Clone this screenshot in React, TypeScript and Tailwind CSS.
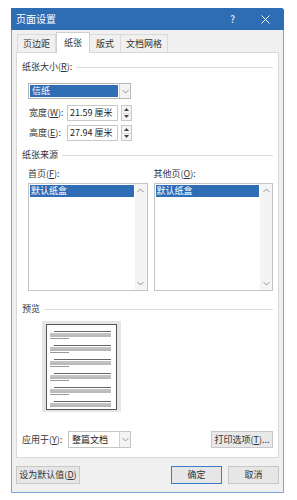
import React from "react";

const font = { fontFamily: '"Noto Sans CJK SC", "Noto Sans", sans-serif' };

function SectionHeader({ label }: { label: React.ReactNode }) {
  return (
    <div className="flex items-center h-[12px] gap-[4px]">
      <span className="text-[9px] leading-[12px] text-[#333] whitespace-nowrap">{label}</span>
      <div className="flex-1 h-px bg-[#dcdcdc]" />
    </div>
  );
}

function Chevron({ up = false }: { up?: boolean }) {
  return (
    <svg width="7" height="5" viewBox="0 0 7 5">
      <path d={up ? "M0.5 4 L3.5 1 L6.5 4" : "M0.5 1 L3.5 4 L6.5 1"} fill="none" stroke="#8a8a8a" strokeWidth="0.9" />
    </svg>
  );
}

function Spinner() {
  return (
    <div className="w-[11px] h-[16px] border border-[#c8c8c8] bg-[#f4f4f4] flex flex-col">
      <div className="flex-1 flex items-center justify-center border-b border-[#dcdcdc]">
        <svg width="5" height="3" viewBox="0 0 5 3"><path d="M0 3 L2.5 0 L5 3 Z" fill="#444" /></svg>
      </div>
      <div className="flex-1 flex items-center justify-center">
        <svg width="5" height="3" viewBox="0 0 5 3"><path d="M0 0 L2.5 3 L5 0 Z" fill="#444" /></svg>
      </div>
    </div>
  );
}

function ListBox() {
  return (
    <div className="flex-1 h-[108px] border border-[#c4c4c4] bg-white flex">
      <div className="flex-1 p-px">
        <div className="h-[12px] bg-[#2f6db5] text-white text-[9px] leading-[12px] px-[1px]">默认纸盒</div>
      </div>
      <div className="w-[12px] bg-[#f4f4f4] flex flex-col justify-between items-center py-[4px]">
        <Chevron up />
        <Chevron />
      </div>
    </div>
  );
}

function PreviewPage() {
  const groups = [0, 14, 28, 42, 56, 70];
  return (
    <div className="w-[79px] h-[91px] bg-[#e6e6e6] flex items-center justify-center ml-[14px]">
      <div className="w-[71px] h-[86px] bg-white border border-[#555]">
        <svg width="69" height="84" viewBox="0 0 69 84">
          {groups.map((g, i) => (
            <g key={i}>
              <rect x="7" y={6 + g} width="57" height="1" fill="#666" />
              <rect x="3" y={8.5 + g} width="61" height="1" fill="#888" />
              <rect x="3" y={10.5 + g} width="61" height="1" fill="#777" />
              {i < 5 && <rect x="3" y={13 + g} width="19" height="1" fill="#999" />}
            </g>
          ))}
        </svg>
      </div>
    </div>
  );
}

export default function App() {
  return (
    <div className="w-[297px] h-[500px] bg-white pt-[8px] pl-[11px]" style={font}>
      <div className="w-[273px] h-[485px] border border-[#7aa3d6] bg-[#f0f0f0] flex flex-col rounded-tr-[3px]">
        {/* Title bar */}
        <div className="h-[22px] bg-[#2e6db4] flex items-center px-[5px] text-white shrink-0 -mx-px -mt-px rounded-tr-[3px]">
          <span className="text-[10px] leading-none">页面设置</span>
          <div className="flex-1" />
          <span className="text-[10px] leading-none mr-[26px]">?</span>
          <svg width="9" height="9" viewBox="0 0 9 9" className="mr-[9px]">
            <path d="M0.5 0.5 L8.5 8.5 M8.5 0.5 L0.5 8.5" stroke="white" strokeWidth="1" />
          </svg>
        </div>

        <div className="flex flex-col px-[4px]">
          {/* Tabs */}
          <div className="flex items-end h-[22px] pl-[1px] text-[9px] text-[#333]">
            <div className="h-[18px] px-[5px] flex items-center border border-b-0 border-[#dadada] bg-[#f0f0f0]">页边距</div>
            <div className="h-[21px] px-[7px] flex items-center border border-b-0 border-[#d0d0d0] bg-white -mb-px relative z-10">纸张</div>
            <div className="h-[18px] px-[6px] flex items-center border border-b-0 border-l-0 border-[#dadada] bg-[#f0f0f0]">版式</div>
            <div className="h-[18px] px-[5px] flex items-center border border-b-0 border-l-0 border-[#dadada] bg-[#f0f0f0]">文档网格</div>
          </div>

          {/* Panel */}
          <div className="h-[406px] border border-[#d9d9d9] bg-white pt-[8px] px-[5px] flex flex-col">
            <SectionHeader label={<>纸张大小(<u>R</u>):</>} />
            <div className="mt-[10px] ml-[6px] w-[103px] h-[16px] border border-[#b8b8b8] flex">
              <div className="flex-1 p-px">
                <div className="h-full bg-[#2f6db5] text-white text-[9px] leading-[12px] px-[2px]">信纸</div>
              </div>
              <div className="w-[11px] border-l border-[#d0d0d0] bg-[#f4f4f4] flex items-center justify-center">
                <Chevron />
              </div>
            </div>
            <div className="mt-[6px] ml-[7px] flex items-center h-[16px]">
              <span className="w-[38px] text-[9px] text-[#333]">宽度(<u>W</u>):</span>
              <div className="w-[51px] h-[16px] border border-[#c8c8c8] text-[9px] leading-[14px] text-[#222] px-[2px]">21.59 厘米</div>
              <div className="ml-[3px]"><Spinner /></div>
            </div>
            <div className="mt-[4px] ml-[7px] flex items-center h-[16px]">
              <span className="w-[38px] text-[9px] text-[#333]">高度(<u>E</u>):</span>
              <div className="w-[51px] h-[16px] border border-[#c8c8c8] text-[9px] leading-[14px] text-[#222] px-[2px]">27.94 厘米</div>
              <div className="ml-[3px]"><Spinner /></div>
            </div>

            <div className="mt-[8px]"><SectionHeader label="纸张来源" /></div>
            <div className="mt-[7px] ml-[6px] flex gap-[6px]">
              <div className="flex-1 flex flex-col">
                <span className="text-[9px] leading-[12px] text-[#333]">首页(<u>F</u>):</span>
                <div className="mt-[3px] flex"><ListBox /></div>
              </div>
              <div className="flex-1 flex flex-col">
                <span className="text-[9px] leading-[12px] text-[#333]">其他页(<u>O</u>):</span>
                <div className="mt-[3px] flex"><ListBox /></div>
              </div>
            </div>

            <div className="mt-[12px]"><SectionHeader label="预览" /></div>
            <div className="mt-[6px] ml-[6px]"><PreviewPage /></div>

            <div className="mt-[19px] flex items-center h-[17px]">
              <span className="w-[46px] text-[9px] text-[#333]">应用于(<u>Y</u>):</span>
              <div className="w-[63px] h-[17px] border border-[#c4c4c4] flex bg-white">
                <div className="flex-1 text-[9px] leading-[15px] px-[3px] text-[#222]">整篇文档</div>
                <div className="w-[11px] border-l border-[#d0d0d0] bg-[#f4f4f4] flex items-center justify-center">
                  <Chevron />
                </div>
              </div>
              <div className="flex-1" />
              <div className="w-[62px] h-[17px] border border-[#c8c8c8] bg-[#e8e8e8] text-[9px] leading-[15px] text-center text-[#333]">打印选项(<u>T</u>)...</div>
            </div>
          </div>

          {/* Bottom buttons */}
          <div className="mt-[8px] flex items-center h-[18px]">
            <div className="w-[64px] h-[18px] border border-[#c8c8c8] bg-[#e6e6e6] text-[9px] leading-[16px] text-center text-[#333]">设为默认值(<u>D</u>)</div>
            <div className="flex-1" />
            <div className="w-[51px] h-[18px] border border-[#3c7bc7] bg-[#e6e6e6] text-[9px] leading-[16px] text-center text-[#333]">确定</div>
            <div className="w-[51px] h-[18px] ml-[6px] border border-[#c8c8c8] bg-[#e6e6e6] text-[9px] leading-[16px] text-center text-[#333]">取消</div>
          </div>
        </div>
      </div>
    </div>
  );
}
